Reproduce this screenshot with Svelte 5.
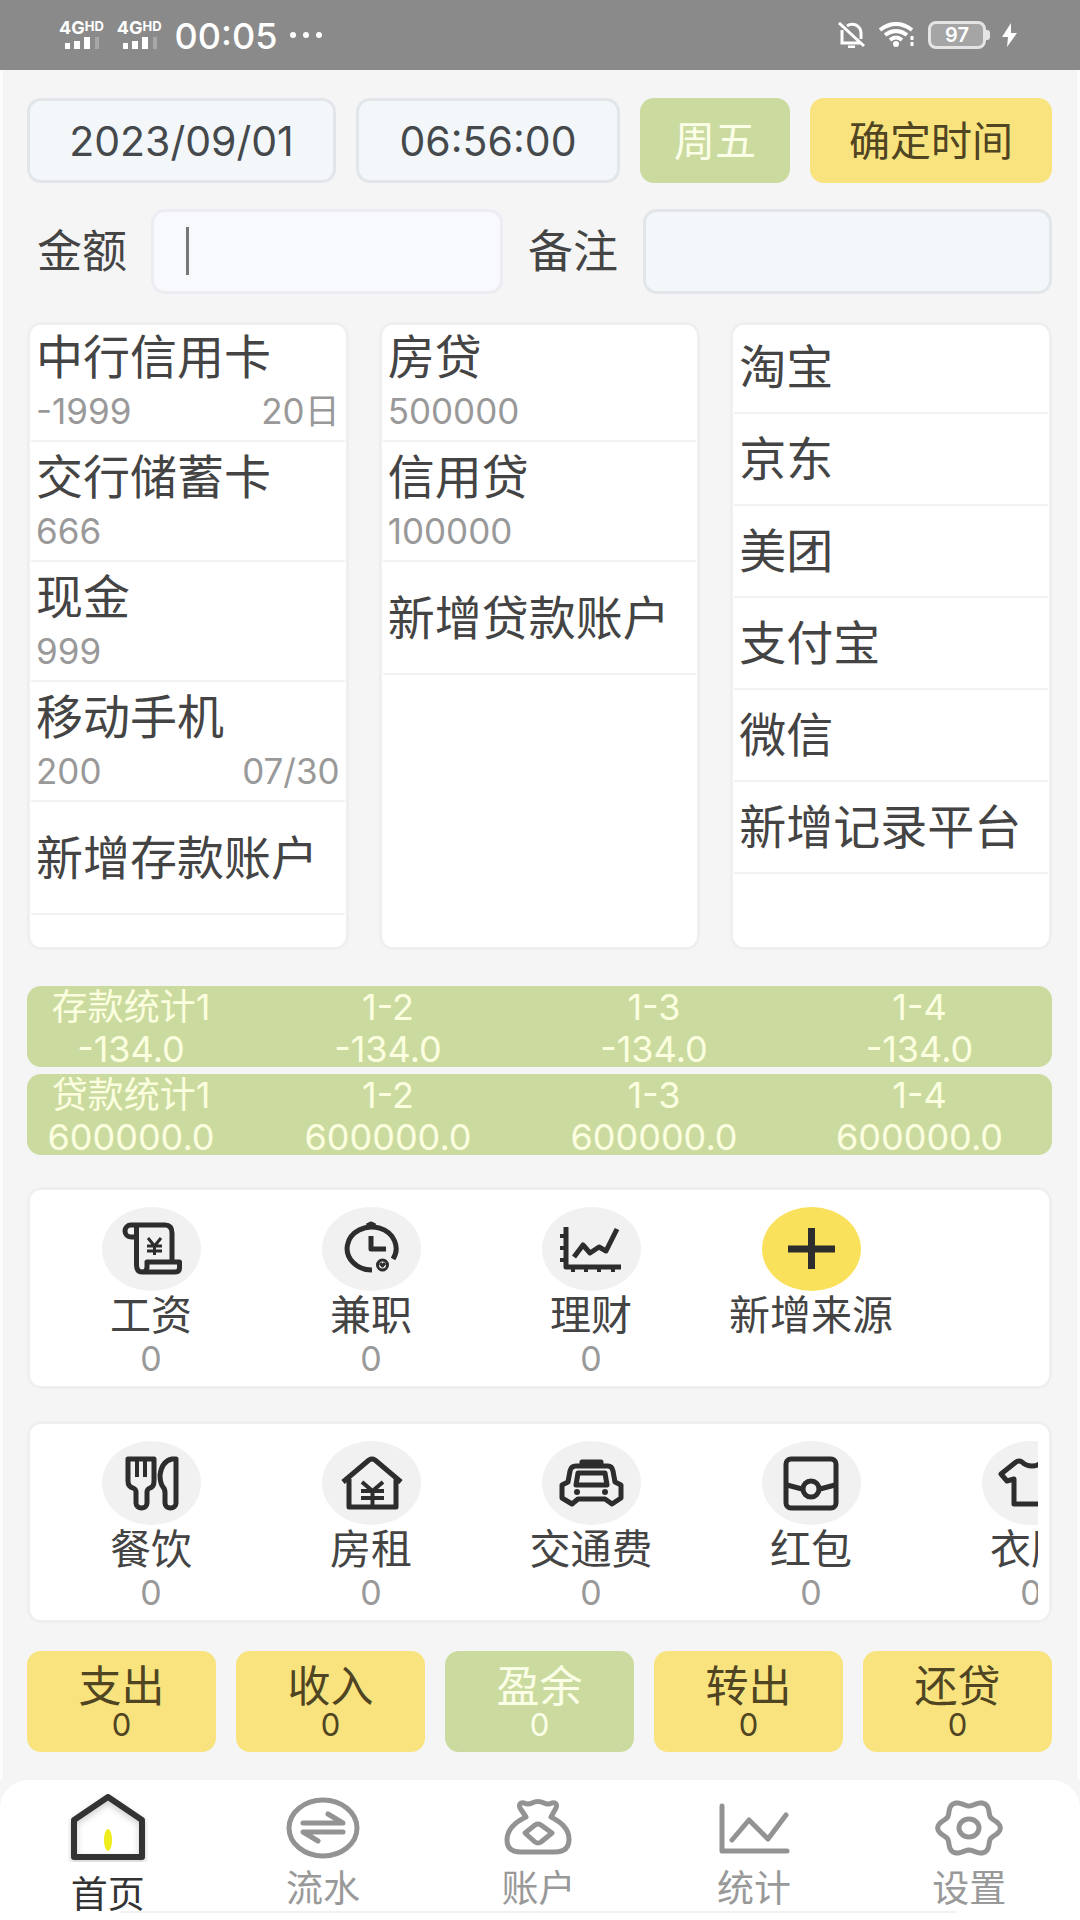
<script lang="ts">
	interface Account {
		name: string;
		amount?: string;
		due?: string;
	}

	interface Category {
		name: string;
		icon: string;
		amount?: string;
	}

	let date = $state('2023/09/01');
	let time = $state('06:56:00');
	let amount = $state('');
	let remark = $state('');
	let activeTab = $state('首页');

	const deposits: Account[] = [
		{ name: '中行信用卡', amount: '-1999', due: '20日' },
		{ name: '交行储蓄卡', amount: '666' },
		{ name: '现金', amount: '999' },
		{ name: '移动手机', amount: '200', due: '07/30' },
		{ name: '新增存款账户' }
	];

	const loans: Account[] = [
		{ name: '房贷', amount: '500000' },
		{ name: '信用贷', amount: '100000' },
		{ name: '新增贷款账户' }
	];

	const platforms = ['淘宝', '京东', '美团', '支付宝', '微信', '新增记录平台'];

	const stats = [
		{ labels: ['存款统计1', '1-2', '1-3', '1-4'], value: '-134.0' },
		{ labels: ['贷款统计1', '1-2', '1-3', '1-4'], value: '600000.0' }
	];

	const income: Category[] = [
		{ name: '工资', icon: 'salary', amount: '0' },
		{ name: '兼职', icon: 'clock', amount: '0' },
		{ name: '理财', icon: 'invest', amount: '0' },
		{ name: '新增来源', icon: 'plus' }
	];

	const expenses: Category[] = [
		{ name: '餐饮', icon: 'food', amount: '0' },
		{ name: '房租', icon: 'rent', amount: '0' },
		{ name: '交通费', icon: 'taxi', amount: '0' },
		{ name: '红包', icon: 'packet', amount: '0' },
		{ name: '衣服', icon: 'shirt', amount: '0' }
	];

	const actions = ['支出', '收入', '盈余', '转出', '还贷'];
	const tabs = ['首页', '流水', '账户', '统计', '设置'];

	// Six-lobed outline for the settings gear
	const gear = Array.from({ length: 72 }, (_, i) => {
		const a = (i / 72) * Math.PI * 2;
		const r = 1 + 0.12 * Math.cos(a * 6);
		return `${(40 + 28 * r * Math.cos(a)).toFixed(1)},${(36 + 25 * r * Math.sin(a)).toFixed(1)}`;
	}).join(' ');
</script>

{#snippet signal()}
	<span class="signal">
		<span class="net">4G<small>HD</small></span>
		<svg width="36" height="12" viewBox="0 0 36 12" fill="#fff">
			<rect x="0" y="6" width="5" height="6" />
			<rect x="9" y="4" width="6" height="8" />
			<rect x="19" y="0" width="6" height="12" />
			<rect x="30" y="0" width="4" height="12" opacity="0.25" />
		</svg>
	</span>
{/snippet}

{#snippet accountList(items: Account[])}
	<ul class="panel">
		{#each items as item}
			<li class:add={!item.amount}>
				<button type="button" class="row">
					<span class="name">{item.name}</span>
					{#if item.amount}
						<span class="detail">
							<span>{item.amount}</span>
							<span>{item.due ?? ''}</span>
						</span>
					{/if}
				</button>
			</li>
		{/each}
	</ul>
{/snippet}

{#snippet categoryIcon(icon: string)}
	<svg class="glyph" width="99" height="84" viewBox="0 0 99 84">
		{#if icon === 'salary'}
			<path d="M35 30h-6a6 6 0 0 1 0-12h34q7 0 7 8v28M34.500 20v38q0 7 6 7h32q5 0 5-4v-6H45v5q0 5-5 5" />
			<path class="fine" d="M46 31l6.500 8 6.500-8M52.500 39v9M45 39h15M45 44h15" />
		{:else if icon === 'clock'}
			<path d="M50 63A24.500 21.500 0 1 1 71 52" />
			<path d="M45 19l4-2 4 2" />
			<path d="M49 29v13h15" />
			<circle class="fine" cx="60.500" cy="58" r="5" />
			<path class="fine" d="M58 56l2.500 3 2.500-3" />
		{:else if icon === 'invest'}
			<path d="M24 20v40h55" />
			<path d="M32 50l9-12 7 8 9-6 7 4 11-22" />
			<path class="thin" d="M18 29h6M18 41h6M18 53h6M31 60v5M44 60v5M57 60v5M71 60v5" />
		{:else if icon === 'plus'}
			<path class="bold" d="M26 42h47M49.500 21v41" />
		{:else if icon === 'food'}
			<path d="M26 18v22q0 6 5 7 3 1 3 4v11a5.500 5 0 0 0 11 0V51q0-3 3-4 4-1 4-7V18z" />
			<path class="thin" d="M35 18v18M43 18v18" />
			<path d="M74 18v44a5.500 5 0 0 1-11 0V52q0-4-2-6-3-4-3-12 2-14 12-16z" />
		{:else if icon === 'rent'}
			<path d="M21 41l26-22q3-2 6 0l26 22M27 38v28h47V38" />
			<path class="thin" d="M40 41l10.500 9L61 41M50.500 50v15M39 50h23M39 57h23" />
		{:else if icon === 'taxi'}
			<path d="M34 25h32q4 0 5 5l2 11 6 3v13l-9 6-7-5H36l-6 5-10-6V44l6-3 2-11q1-5 6-5z" />
			<path d="M36 32h27l2 12H34zM40 23v-2h19v2" />
			<circle class="dot" cx="35" cy="51" r="3" />
			<circle class="dot" cx="63" cy="51" r="3" />
		{:else if icon === 'packet'}
			<rect x="24" y="18" width="50" height="49" rx="5" />
			<circle cx="49" cy="48" r="8" />
			<path d="M25 44l15 4M58 48l15-4" />
		{:else if icon === 'shirt'}
			<path d="M50 25q-6 0-10-4-3-2-6 0L19 33l6 7 7-2v25h36V38l7 2 6-7-15-12q-3-2-6 0-4 4-10 4z" />
		{/if}
	</svg>
{/snippet}

{#snippet categoryList(items: Category[])}
	<section class="categories">
		<div class="scroller">
			{#each items as item}
				<button type="button" class="category">
					<span class="bubble" class:yellow={item.icon === 'plus'}>
						{@render categoryIcon(item.icon)}
					</span>
					<span class="label">{item.name}</span>
					<span class="value">{item.amount ?? ''}</span>
				</button>
			{/each}
		</div>
	</section>
{/snippet}

<header class="status">
	<div class="side">
		{@render signal()}
		{@render signal()}
		<span class="clock">00:05</span>
		<svg width="32" height="6" viewBox="0 0 32 6" fill="#fff">
			<circle cx="3" cy="3" r="3" />
			<circle cx="16" cy="3" r="3" />
			<circle cx="29" cy="3" r="3" />
		</svg>
	</div>
	<div class="side right">
		<svg width="28" height="26" viewBox="0 0 28 26" fill="none" stroke="#fff" stroke-width="3">
			<path d="M4 8v13h19M9 4q4-3 9-1 5 3 5 8v6M1 1l25 23M10 25h7" />
		</svg>
		<svg width="38" height="26" viewBox="0 0 38 26" fill="none" stroke="#fff" stroke-width="4">
			<path d="M2 8q16-12 32 0M7 13q11-8 22 0M12 18q6-5 12 0" />
			<circle cx="18" cy="22" r="3" fill="#fff" stroke="none" />
			<path d="M34 14v4M34 20v4" stroke-width="3" />
		</svg>
		<span class="battery">97</span>
		<svg width="16" height="24" viewBox="0 0 16 24" fill="#fff">
			<path d="M9 0L0 14h6l-1 10 10-14H9z" />
		</svg>
	</div>
</header>

<main>
	<form class="when" onsubmit={(e) => e.preventDefault()}>
		<input type="text" aria-label="日期" bind:value={date} />
		<input type="text" aria-label="时间" bind:value={time} />
		<button type="button" class="green">周五</button>
		<button type="submit">确定时间</button>
	</form>

	<div class="entry">
		<label for="amount">金额</label>
		<span class="focused">
			<input id="amount" type="text" inputmode="decimal" bind:value={amount} />
		</span>
		<label for="remark" class="second">备注</label>
		<input id="remark" type="text" bind:value={remark} />
	</div>

	<div class="panels">
		{@render accountList(deposits)}
		{@render accountList(loans)}
		<ul class="panel platforms">
			{#each platforms as platform}
				<li><button type="button" class="row"><span class="name">{platform}</span></button></li>
			{/each}
		</ul>
	</div>

	<div class="stats">
		{#each stats as stat}
			<div class="stat">
				{#each stat.labels as label}
					<div class="cell">
						<span>{label}</span>
						<span>{stat.value}</span>
					</div>
				{/each}
			</div>
		{/each}
	</div>

	{@render categoryList(income)}
	{@render categoryList(expenses)}

	<div class="actions">
		{#each actions as action}
			<button type="button" class:green={action === '盈余'}>
				<span class="title">{action}</span>
				<span class="count">0</span>
			</button>
		{/each}
	</div>
</main>

<nav>
	<div class="tabs">
		{#each tabs as tab}
			<button
				type="button"
				class="tab"
				class:active={tab === activeTab}
				onclick={() => (activeTab = tab)}
			>
				<svg width="80" height="70" viewBox="0 0 80 70">
					{#if tab === '首页'}
						<path class="home" d="M40 5l34 23v37H6V28z" />
						<ellipse class="lamp" cx="40" cy="48" rx="4" ry="11" />
					{:else if tab === '流水'}
						<ellipse cx="40" cy="36" rx="34" ry="28" />
						<path d="M20 31h40L45 22M60 40H20l15 9" />
					{:else if tab === '账户'}
						<path
							d="M28 25l-6-9q-2-6 4-5 4 2 8 0 6-3 12 0 4 2 8 0 6-1 4 5l-5 9q18 9 18 22 0 13-14 13H23Q9 60 9 48q0-14 19-23z"
						/>
						<path d="M27 41l10-8q3-2 6 0l11 8-11 9q-3 2-6 0z" />
					{:else if tab === '统计'}
						<path d="M8 14v45h65M18 48l17-20 19 19 18-24" />
					{:else}
						<polygon points={gear} />
						<ellipse cx="40" cy="36" rx="10" ry="9" />
					{/if}
				</svg>
				<span class="caption">{tab}</span>
			</button>
		{/each}
	</div>
</nav>

<style>
	:global(body) {
		margin: 0;
		background: #f5f5f5;
		color: #444;
		font-family: Inter, 'Noto Sans CJK SC', sans-serif;
	}

	button,
	input {
		box-sizing: border-box;
		min-width: 0;
		margin: 0;
		padding: 0;
		border: none;
		background: none;
		color: inherit;
		font: inherit;
	}

	button {
		cursor: pointer;
	}

	svg {
		display: block;
		flex: none;
	}

	/* Status bar */
	.status {
		display: flex;
		align-items: center;
		justify-content: space-between;
		height: 70px;
		padding: 0 62px 0 59px;
		background: #8a8a8a;
		color: #fff;
	}

	.side {
		display: flex;
		align-items: center;
		gap: 13px;
	}

	.side.right {
		gap: 12px;
	}

	.signal {
		display: flex;
		flex-direction: column;
		gap: 2px;
	}

	.signal svg {
		margin-left: 6px;
	}

	.net {
		display: flex;
		font-size: 18px;
		font-weight: 700;
		line-height: 14px;
	}

	.net small {
		font-size: 13px;
		line-height: 10px;
	}

	.clock {
		font-size: 36px;
		font-weight: 500;
		line-height: 42px;
		padding-top: 2px;
	}

	.battery {
		position: relative;
		box-sizing: border-box;
		width: 58px;
		margin-right: 4px;
		border: 3px solid #e4e4e4;
		border-radius: 8px;
		background: #a5a5a5;
		font-size: 20px;
		font-weight: 600;
		line-height: 22px;
		text-align: center;
	}

	.battery::after {
		content: '';
		position: absolute;
		top: 6px;
		right: -7px;
		width: 4px;
		height: 10px;
		border-radius: 0 3px 3px 0;
		background: #e4e4e4;
	}

	main {
		display: flex;
		flex-direction: column;
		gap: 26px;
		padding: 28px 25px 28px 24px;
		border: solid #fcfcfc;
		border-width: 0 3px;
	}

	/* Date and entry fields */
	.when {
		display: grid;
		grid-template-columns: 309fr 264fr 150fr 242fr;
		gap: 20px;
	}

	.when input,
	.entry input {
		width: 100%;
		height: 85px;
		border: 3px solid #e2e6ea;
		border-radius: 14px;
		background: #f3f7fa;
		color: #45494c;
		font-size: 41px;
		text-align: center;
	}

	.when button {
		height: 85px;
		padding-bottom: 5px;
		border-radius: 14px;
		background: #f9e37e;
		color: #4f4522;
		font-size: 41px;
	}

	.when .green,
	.actions .green {
		background: #cbdb9f;
		color: #fbffe8;
	}

	.entry {
		display: grid;
		grid-template-columns: 114px 351fr 140px 408fr;
		align-items: center;
		padding-left: 10px;
		font-size: 45px;
		line-height: 60px;
	}

	.entry .second {
		padding-left: 25px;
	}

	.entry input {
		display: block;
		padding: 0 32px;
		text-align: left;
	}

	.focused {
		position: relative;
	}

	.focused input {
		border-color: #ececf2;
		background: #f8f9fd;
		caret-color: transparent;
		outline: none;
	}

	/* Caret */
	.focused::after {
		content: '';
		position: absolute;
		top: 18px;
		left: 35px;
		width: 3px;
		height: 48px;
		background: #777;
	}

	/* Account panels */
	.panels {
		display: grid;
		grid-template-columns: repeat(3, 1fr);
		gap: 30px;
		padding-top: 2px;
	}

	.panel {
		min-height: 628px;
		margin: 0;
		padding: 0;
		border-radius: 14px;
		background: #fff;
		box-shadow: inset 0 0 0 3px #efefef;
		list-style: none;
	}

	.panel li {
		box-sizing: border-box;
		height: 120px;
		margin: 0 4px;
		border-bottom: 2px solid #f2f2f2;
	}

	.panel li.add {
		height: 113px;
	}

	.panel.platforms li {
		height: 92px;
	}

	.row {
		display: flex;
		flex-direction: column;
		justify-content: center;
		width: 100%;
		height: 100%;
		padding: 0 5px;
		text-align: left;
		white-space: nowrap;
	}

	.name {
		font-size: 47px;
		line-height: 60px;
	}

	.detail {
		display: flex;
		justify-content: space-between;
		color: #999;
		font-size: 35px;
		line-height: 48px;
	}

	/* Totals */
	.stats {
		display: grid;
		gap: 7px;
		padding: 10px 0 6px;
	}

	.stat {
		display: grid;
		grid-template-columns: 228fr 266fr 266fr 265fr;
		height: 81px;
		border-radius: 14px;
		background: #cbdb9f;
		color: #fbffe0;
		font-size: 36px;
		line-height: 42px;
		text-align: center;
	}

	.cell {
		display: flex;
		flex-direction: column;
	}

	.cell:first-child {
		padding-right: 20px;
	}

	/* Category cards */
	.categories {
		height: 202px;
		padding: 0 14px;
		border-radius: 14px;
		background: #fff;
		box-shadow: inset 0 0 0 3px #efefef;
	}

	.categories + .categories {
		margin-top: 6px;
	}

	.scroller {
		display: flex;
		height: 100%;
		overflow: hidden;
	}

	.category {
		display: flex;
		flex: none;
		flex-direction: column;
		align-items: center;
		width: 220px;
		padding-top: 20px;
	}

	.bubble {
		border-radius: 50%;
		background: #f1f1f1;
	}

	.bubble.yellow {
		background: #f9e15c;
	}

	.glyph {
		fill: none;
		stroke: #2d2d2d;
		stroke-width: 5;
		stroke-linejoin: round;
	}

	.glyph .thin {
		stroke-width: 4;
	}

	.glyph .fine {
		stroke-width: 3;
	}

	.glyph .bold {
		stroke-width: 7;
	}

	.glyph .dot {
		fill: #2d2d2d;
		stroke: none;
	}

	.label {
		font-size: 41px;
		line-height: 48px;
	}

	.value {
		color: #999;
		font-size: 34px;
		line-height: 40px;
	}

	/* Action buttons */
	.actions {
		display: grid;
		grid-template-columns: repeat(5, 1fr);
		gap: 20px;
		padding-top: 2px;
	}

	.actions button {
		display: flex;
		flex-direction: column;
		align-items: center;
		height: 101px;
		padding-top: 12px;
		border-radius: 14px;
		background: #f9e37e;
		color: #4f4522;
	}

	.title {
		font-size: 43px;
		line-height: 46px;
	}

	.count {
		font-size: 31px;
		line-height: 32px;
	}

	/* Tab bar */
	nav {
		padding: 12px 3px 0 0;
		border-radius: 28px 28px 0 0;
		background: #fff;
	}

	nav::after {
		content: '';
		display: block;
		height: 7px;
		margin: 0 120px;
		border-top: 2px solid #f1f1f1;
	}

	.tabs {
		display: grid;
		grid-template-columns: repeat(5, 1fr);
		height: 119px;
	}

	.tab {
		display: flex;
		flex-direction: column;
		align-items: center;
		color: #999;
	}

	.tab svg {
		fill: none;
		stroke: #939393;
		stroke-width: 5;
		stroke-linecap: round;
		stroke-linejoin: round;
	}

	.tab .home {
		stroke: #333;
		stroke-width: 6;
		filter: drop-shadow(0 3px 3px rgba(0, 0, 0, 0.2));
	}

	.tab .lamp {
		fill: #efed1c;
		stroke: none;
	}

	.caption {
		padding-top: 5px;
		font-size: 37px;
		line-height: 44px;
	}

	.active .caption {
		padding-top: 11px;
		color: #333;
	}
</style>
